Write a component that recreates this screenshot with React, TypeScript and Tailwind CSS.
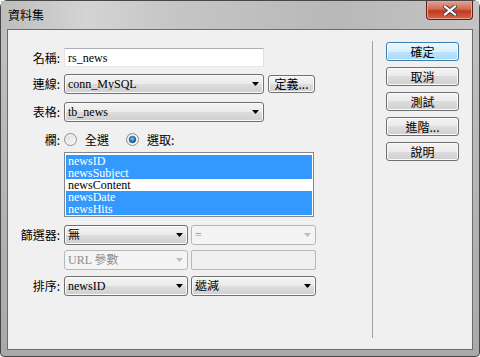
import React from 'react';

const serif = "font-['Liberation_Serif','Noto_Sans_CJK_TC',serif]";
const sans = "font-['Noto_Sans_CJK_TC','Liberation_Sans',sans-serif]";

interface ComboProps {
  value: string;
  className?: string;
  disabled?: boolean;
}

const Arrow: React.FC<{ disabled?: boolean }> = ({ disabled }) => (
  <svg width="7" height="4" viewBox="0 0 7 4" className="shrink-0">
    <path d="M0 0h7L3.5 4z" fill={disabled ? '#bcbcbc' : '#000'} />
  </svg>
);

const Combo: React.FC<ComboProps> = ({ value, className, disabled }) => {
  return (
    <div
      className={`h-[20px] flex items-center pl-[3px] pr-[4px] rounded-[3px] border ${
        disabled
          ? 'border-[#b4b8bb] bg-[#f4f4f4] text-[#8d8d8d]'
          : 'border-[#707070] bg-[linear-gradient(to_bottom,#f3f3f3_0%,#ebebeb_50%,#dddddd_50%,#cfcfcf_100%)] text-black shadow-[inset_0_0_0_1px_#fbfbfb]'
      } ${className}`}
    >
      <span className={`flex-1 truncate text-[12px] leading-none ${serif}`}>{value}</span>
      <Arrow disabled={disabled} />
    </div>
  );
};

interface BtnProps {
  label: string;
  primary?: boolean;
  className?: string;
}

const Btn: React.FC<BtnProps> = ({ label, primary, className }) => (
  <div
    className={`flex items-center justify-center rounded-[3px] border text-[12px] leading-none text-black ${sans} ${
      primary
        ? 'border-[#3c7fb1] bg-[linear-gradient(to_bottom,#eaf6fd_0%,#d9f0fc_50%,#bee6fd_50%,#a7d9f5_100%)] shadow-[inset_0_0_0_1px_#f4fbff]'
        : 'border-[#707070] bg-[linear-gradient(to_bottom,#f3f3f3_0%,#ebebeb_50%,#dddddd_50%,#cfcfcf_100%)] shadow-[inset_0_0_0_1px_#fbfbfb]'
    } ${className}`}
  >
    {label}
  </div>
);

const Radio: React.FC<{ checked?: boolean }> = ({ checked }) => (
  <svg width="13" height="13" viewBox="0 0 13 13" className="shrink-0">
    <defs>
      <linearGradient id="rg" x1="0" y1="0" x2="1" y2="1">
        <stop offset="0" stopColor="#d8d8d8" />
        <stop offset="1" stopColor="#fbfbfb" />
      </linearGradient>
      <radialGradient id="dot" cx="0.45" cy="0.4" r="0.6">
        <stop offset="0" stopColor="#79d1f7" />
        <stop offset="0.6" stopColor="#1f7fc4" />
        <stop offset="1" stopColor="#0e3f6d" />
      </radialGradient>
    </defs>
    <circle cx="6.5" cy="6.5" r="6" fill="url(#rg)" stroke="#8c8f91" />
    <circle cx="6.5" cy="6.5" r="4.5" fill="none" stroke="#f4f4f4" />
    {checked && <circle cx="6.5" cy="6.5" r="3.3" fill="url(#dot)" stroke="#24507e" strokeWidth="0.6" />}
  </svg>
);

const Label: React.FC<{ text: string }> = ({ text }) => (
  <span className={`w-[52px] mr-[4px] text-right text-[12px] leading-none text-black ${sans}`}>{text}</span>
);

const fields = [
  { name: 'newsID', selected: true },
  { name: 'newsSubject', selected: true },
  { name: 'newsContent', selected: false },
  { name: 'newsDate', selected: true },
  { name: 'newsHits', selected: true },
];

const App: React.FC = () => {
  return (
    <div className="w-[480px] h-[357px] flex flex-col rounded-t-[7px] rounded-b-[4px] border border-[#474747] bg-[linear-gradient(to_bottom,#c2c2c2,#a9a9a9)] px-[6px] pb-[6px]">
      {/* Title bar */}
      <div className="h-[28px] flex items-start justify-between bg-[linear-gradient(to_right,#bdbdbd_0%,#d4d4d4_18%,#c6c6c6_35%,#b8b8b8_70%,#c4c4c4_100%)] -mx-[6px] px-[6px]">
        <span className={`pl-[1px] pt-[8px] text-[12px] leading-none text-black ${sans}`}>資料集</span>
        <div className="w-[47px] h-[19px] flex items-center justify-center rounded-b-[4px] border border-t-0 border-[#5b2318] bg-[linear-gradient(to_bottom,#e3a494_0%,#d06a52_45%,#c1391f_55%,#d4654b_100%)] shadow-[inset_0_0_0_1px_#e9a28f]">
          <svg width="14" height="11" viewBox="0 0 14 11">
            <path d="M2 1.5l10 8M12 1.5l-10 8" stroke="#3a3f48" strokeWidth="4" strokeLinecap="square" />
            <path d="M2 1.5l10 8M12 1.5l-10 8" stroke="#ffffff" strokeWidth="2.2" strokeLinecap="square" />
          </svg>
        </div>
      </div>

      {/* Client area */}
      <div className="flex-1 flex border border-[#6d6d6d] bg-[#f0f0f0]">
        {/* Form */}
        <div className="w-[364px] flex flex-col pt-[18px]">
          <div className="flex items-center">
            <Label text="名稱:" />
            <div className="w-[200px] h-[19px] flex items-center pl-[3px] bg-white border border-[#abadb3] border-l-[#e2e3ea] border-r-[#dbdfe6] border-b-[#e3e9ef]">
              <span className={`text-[12px] leading-none text-black ${serif}`}>rs_news</span>
            </div>
          </div>

          <div className="flex items-center mt-[7px]">
            <Label text="連線:" />
            <Combo value="conn_MySQL" className="w-[200px]" />
            <Btn label="定義..." className="ml-[4px] w-[47px] h-[18px]" />
          </div>

          <div className="flex items-center mt-[8px]">
            <Label text="表格:" />
            <Combo value="tb_news" className="w-[200px]" />
          </div>

          <div className="flex items-center mt-[11px] h-[13px]">
            <Label text="欄:" />
            <Radio />
            <span className={`ml-[8px] text-[12px] leading-none ${sans}`}>全選</span>
            <span className="ml-[17px]">
              <Radio checked />
            </span>
            <span className={`ml-[8px] text-[12px] leading-none ${sans}`}>選取:</span>
          </div>

          <div className="flex mt-[6px]">
            <span className="w-[56px]" />
            <div className="w-[250px] h-[65px] border border-[#828790] bg-white p-px pt-[2px]">
              {fields.map((f) => (
                <div
                  key={f.name}
                  className={`h-[12px] pl-[2px] text-[12px] leading-[12px] ${serif} ${
                    f.selected ? 'bg-[#3399ff] text-white' : 'bg-white text-black'
                  }`}
                >
                  {f.name}
                </div>
              ))}
            </div>
          </div>

          <div className="flex items-center mt-[8px]">
            <Label text="篩選器:" />
            <Combo value="無" className="w-[124px]" />
            <Combo value="=" className="ml-[3px] w-[125px]" disabled />
          </div>

          <div className="flex items-center mt-[5px]">
            <span className="w-[56px]" />
            <Combo value="URL 參數" className="w-[124px]" disabled />
            <div className="ml-[3px] w-[125px] h-[20px] rounded-[2px] border border-[#b4b8bb] bg-[#f0f0f0]" />
          </div>

          <div className="flex items-center mt-[6px]">
            <Label text="排序:" />
            <Combo value="newsID" className="w-[124px]" />
            <Combo value="遞減" className="ml-[3px] w-[125px]" />
          </div>
        </div>

        {/* Separator */}
        <div className="w-px mt-[11px] h-[297px] bg-[#a0a0a0]" />

        {/* Buttons */}
        <div className="flex flex-col gap-[6px] pl-[13px] pt-[12px]">
          <Btn label="確定" primary className="w-[73px] h-[19px]" />
          <Btn label="取消" className="w-[73px] h-[19px]" />
          <Btn label="測試" className="w-[73px] h-[19px]" />
          <Btn label="進階..." className="w-[73px] h-[19px]" />
          <Btn label="說明" className="w-[73px] h-[19px]" />
        </div>
      </div>
    </div>
  );
};

export default App;
